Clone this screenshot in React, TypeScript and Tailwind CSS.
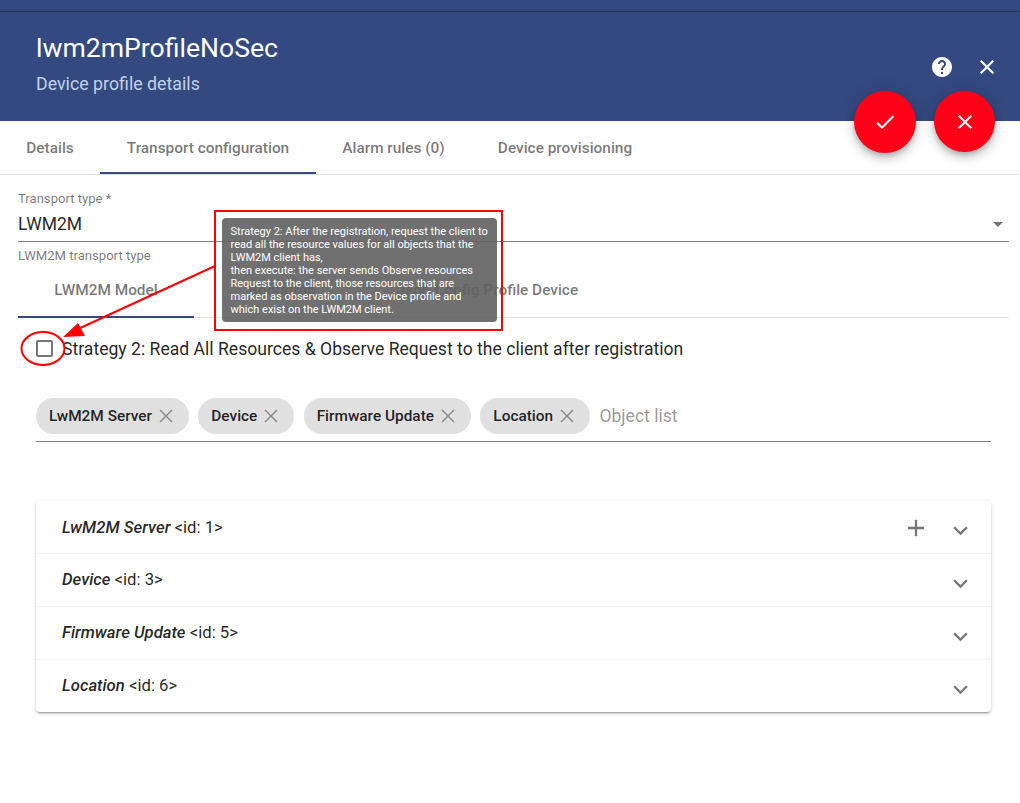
import { MdAdd, MdCheck, MdClose, MdExpandMore, MdHelp } from 'react-icons/md'

const objects = [
  { name: 'LwM2M Server', id: 1 },
  { name: 'Device', id: 3 },
  { name: 'Firmware Update', id: 5 },
  { name: 'Location', id: 6 },
]

const mainTabs = [
  { label: 'Details', cls: 'w-[100px] border-transparent' },
  { label: 'Transport configuration', cls: 'w-[216px] border-[#34497f]' },
  { label: 'Alarm rules (0)', cls: 'w-[155px] border-transparent' },
  { label: 'Device provisioning', cls: 'w-[188px] border-transparent' },
]

const tooltipLines = [
  'Strategy 2: After the registration, request the client to',
  'read all the resource values for all objects that the',
  'LWM2M client has,',
  'then execute: the server sends Observe resources',
  'Request to the client, those resources that are',
  'marked as observation in the Device profile and',
  'which exist on the LWM2M client.',
]

function ChipClose() {
  return (
    <svg className="ml-[7px] text-[#00000066]" width="14" height="14" viewBox="0 0 14 14" fill="none" stroke="currentColor" strokeWidth="1.4">
      <path d="M1 1 13 13M13 1 1 13" />
    </svg>
  )
}

export default function App() {
  return (
    <div className="relative w-[1020px] h-[803px] overflow-hidden bg-white font-['Roboto',sans-serif] text-[#000000de]">
      {/* Header */}
      <div className="h-[121px] bg-[#34497f] pt-[11px]">
        <div className="h-px bg-[#252f5c]" />
        <div className="pl-9 pt-[20px]">
          <div className="text-[26.6px] leading-[32px] text-white">lwm2mProfileNoSec</div>
          <div className="mt-[8px] text-[17.8px] leading-[24px] text-[#c0d2ea]">Device profile details</div>
        </div>
      </div>

      {/* Header actions */}
      <MdHelp className="absolute left-[930px] top-[55px] text-white" size={24} />
      <MdClose className="absolute left-[975px] top-[55px] text-white" size={24} />
      <button className="absolute left-[854px] top-[91px] w-[62px] h-[62px] rounded-full bg-[#ff0019] flex items-center justify-center text-white shadow-[0_3px_5px_-1px_#0003,0_6px_10px_0_#00000024,0_1px_18px_0_#0000001f]">
        <MdCheck size={24} />
      </button>
      <button className="absolute left-[934px] top-[91px] w-[61px] h-[61px] rounded-full bg-[#ff0019] flex items-center justify-center text-white shadow-[0_3px_5px_-1px_#0003,0_6px_10px_0_#00000024,0_1px_18px_0_#0000001f]">
        <MdClose size={24} />
      </button>

      {/* Tabs */}
      <div className="flex h-[54px] border-b border-[#e0e0e0]">
        {mainTabs.map((tab) => (
          <div key={tab.label} className={`flex items-center justify-center h-[53px] pt-[5px] border-b-2 text-[15.4px] font-medium text-[#0000008a] ${tab.cls}`}>
            {tab.label}
          </div>
        ))}
      </div>

      {/* Transport type */}
      <div className="pl-[18px] pt-[16px] pr-[11px]">
        <div className="text-[13.1px] leading-[16px] text-[#0000008a]">Transport type *</div>
        <div className="flex items-center justify-between h-[35px] border-b border-[#00000080]">
          <span className="text-[17.5px]">LWM2M</span>
          <span className="mr-[6px] w-0 h-0 border-x-[5px] border-x-transparent border-t-[5px] border-t-[#0000008a]" />
        </div>
        <div className="mt-[6px] text-[13.1px] leading-[16px] text-[#0000008a]">LWM2M transport type</div>

        {/* Nested tabs */}
        <div className="flex h-[54px] border-b border-[#e0e0e0]">
          <div className="flex items-center justify-center w-[176px] h-[54px] pt-[1px] text-[15.4px] font-medium text-[#0000008a] border-b-2 border-[#34497f]">LWM2M Model</div>
          <div className="flex items-center justify-center w-[176px] h-[53px] text-[15.4px] font-medium text-[#0000008a]">Bootstrap</div>
          <div className="flex items-center justify-center w-[235px] h-[53px] text-[15.4px] font-medium text-[#0000008a]">Json Config Profile Device</div>
        </div>
      </div>

      {/* Strategy checkbox */}
      <div className="flex items-center pl-[36px] mt-[22px] h-[18px]">
        <span className="mb-[2px] w-[17px] h-[17px] rounded-[2px] border-2 border-[#0000008a]" />
        <span className="ml-[9px] text-[17.6px] whitespace-nowrap">Strategy 2: Read All Resources &amp; Observe Request to the client after registration</span>
      </div>

      {/* Object list */}
      <div className="mr-[29px] ml-[36px] mt-[40px] h-[44px] flex gap-[9.3px] border-b border-[#00000080]">
        {objects.map((o) => (
          <div key={o.id} className="flex items-center h-[36px] pl-[13px] pr-[16px] rounded-full bg-[#e0e0e0] text-[15.4px] font-medium">
            <span className="pt-[1px]">{o.name}</span>
            <ChipClose />
          </div>
        ))}
        <div className="flex items-center h-[36px] text-[17.6px] text-[#0000006b]">Object list</div>
      </div>

      {/* Object accordion */}
      <div className="mr-[29px] ml-[36px] mt-[59px] rounded-[4px] bg-white shadow-[0_3px_1px_-2px_#0003,0_2px_2px_0_#00000024,0_1px_5px_0_#0000001f]">
        {objects.map((o, i) => (
          <div key={o.id} className={`flex items-center pl-[26px] pr-[16px] ${i > 0 ? 'h-[53px] border-t border-[#f4f4f4]' : 'h-[52px] pt-[1px]'}`}>
            <span className="text-[16.7px] italic font-medium whitespace-pre">{o.name}</span>
            <span className="text-[16.7px] whitespace-pre"> &lt;id: {o.id}&gt;</span>
            <div className="flex-1" />
            {i === 0 && <MdAdd className="mr-[16px] text-[#0000008a]" size={28} />}
            <MdExpandMore className="mt-[6px] text-[#0000008a]" size={29} />
          </div>
        ))}
      </div>

      {/* Annotation: tooltip, red box, circle and arrow */}
      <div className="absolute left-[222px] top-[218px] w-[275px] h-[104px] rounded-[4px] bg-[#616161]/90 px-[8.5px] pt-[7px] text-[11px] leading-[13px] text-white whitespace-nowrap">
        {tooltipLines.map((line) => (
          <div key={line}>{line}</div>
        ))}
      </div>
      <div className="absolute left-[214px] top-[210px] w-[289px] h-[121px] border-2 border-[#ff0000]" />
      <svg className="absolute left-0 top-0 pointer-events-none" width="1020" height="803" fill="none">
        <ellipse cx="43" cy="348.5" rx="21.5" ry="16.5" stroke="#ff0000" strokeWidth="2" />
        <line x1="215" y1="266" x2="78" y2="329" stroke="#ff0000" strokeWidth="2" />
        <polygon points="63,337 78,323 85,336" fill="#ff0000" />
      </svg>
    </div>
  )
}
